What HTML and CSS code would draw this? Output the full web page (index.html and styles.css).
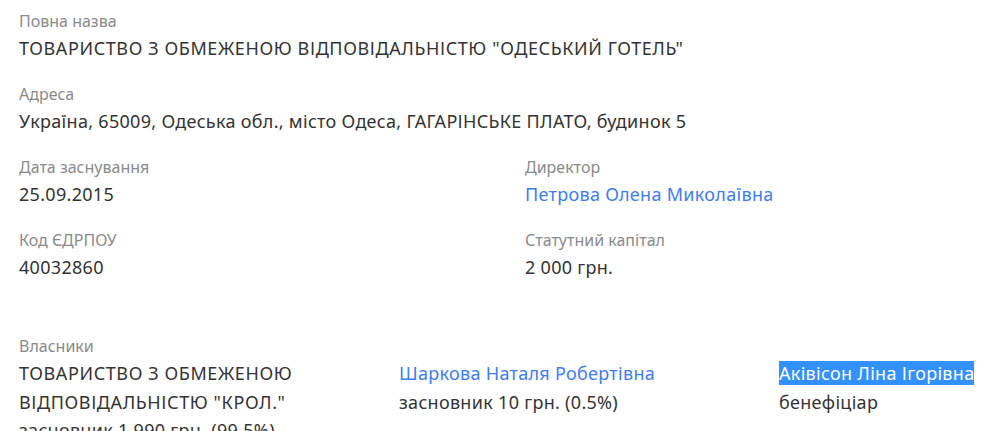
FILE: index.html
```html
<!DOCTYPE html>
<html lang="uk">
<head>
<meta charset="utf-8">
<title>Компанія</title>
<link rel="stylesheet" href="styles.css">
</head>
<body>
<div class="page">
  <div class="field">
    <div class="label">Повна назва</div>
    <div class="value caps">ТОВАРИСТВО З ОБМЕЖЕНОЮ ВІДПОВІДАЛЬНІСТЮ "ОДЕСЬКИЙ ГОТЕЛЬ"</div>
  </div>
  <div class="field">
    <div class="label">Адреса</div>
    <div class="value">Україна, 65009, Одеська обл., місто Одеса, ГАГАРІНСЬКЕ ПЛАТО, будинок 5</div>
  </div>
  <div class="grid2">
    <div class="field">
      <div class="label">Дата заснування</div>
      <div class="value">25.09.2015</div>
    </div>
    <div class="field">
      <div class="label">Директор</div>
      <div class="value"><a class="link" href="#">Петрова Олена Миколаївна</a></div>
    </div>
    <div class="field">
      <div class="label">Код ЄДРПОУ</div>
      <div class="value">40032860</div>
    </div>
    <div class="field">
      <div class="label">Статутний капітал</div>
      <div class="value">2 000 грн.</div>
    </div>
  </div>
  <div class="owners">
    <div class="label">Власники</div>
    <div class="grid3">
      <div class="value"><span class="caps">ТОВАРИСТВО З ОБМЕЖЕНОЮ ВІДПОВІДАЛЬНІСТЮ "КРОЛ."</span><br>засновник 1 990 грн. (99.5%)</div>
      <div class="value"><a class="link" href="#">Шаркова Наталя Робертівна</a><br>засновник 10 грн. (0.5%)</div>
      <div class="value"><span class="selected">Аківісон Ліна Ігорівна</span><br>бенефіціар</div>
    </div>
  </div>
</div>
</body>
</html>
```
FILE: styles.css
```css
html, body {
  margin: 0;
  padding: 0;
  background: #ffffff;
}
body {
  font-family: "Noto Sans", "Open Sans", sans-serif;
  color: #333333;
}
.page {
  padding: 8px 0 0 19px;
}
.field {
  margin-bottom: 19px;
}
.label {
  font-size: 16px;
  line-height: 26px;
  color: #8a8a8a;
}
.value {
  font-size: 18px;
  line-height: 28px;
  letter-spacing: 0.3px;
  color: #333333;
}
.caps {
  letter-spacing: 0.6px;
}
.link {
  color: #3d7cf2;
  text-decoration: none;
}
.grid2 {
  display: grid;
  grid-template-columns: 506px 1fr;
}
.owners {
  margin-top: 33px;
}
.grid3 {
  display: grid;
  grid-template-columns: 380px 380px 1fr;
}
.grid3 .value {
  padding-right: 20px;
  line-height: 28.5px;
}
.selected {
  background: #3390ff;
  color: #ffffff;
}
```
